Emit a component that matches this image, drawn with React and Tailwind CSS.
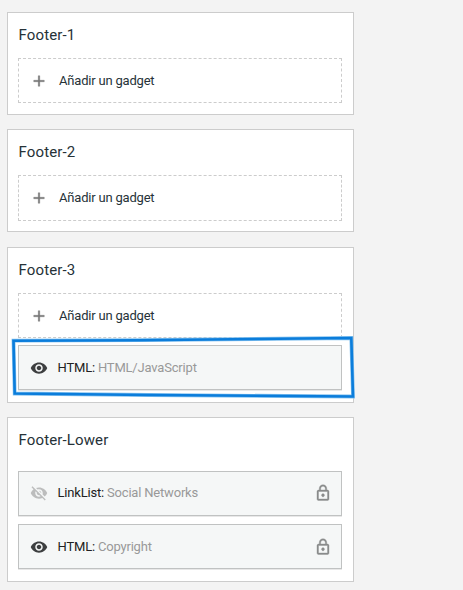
const PATHS = {
  plus: 'M19 13h-6v6h-2v-6H5v-2h6V5h2v6h6v2z',
  eye: 'M12 4.5C7 4.5 2.73 7.61 1 12c1.73 4.39 6 7.5 11 7.5s9.27-3.11 11-7.5c-1.73-4.39-6-7.5-11-7.5zM12 17c-2.76 0-5-2.24-5-5s2.24-5 5-5 5 2.24 5 5-2.24 5-5 5zm0-8c-1.66 0-3 1.34-3 3s1.34 3 3 3 3-1.34 3-3-1.34-3-3-3z',
  eyeOff:
    'M12 7c2.76 0 5 2.24 5 5 0 .65-.13 1.26-.36 1.83l2.92 2.92c1.51-1.26 2.7-2.89 3.43-4.75-1.73-4.39-6-7.5-11-7.5-1.4 0-2.74.25-3.98.7l2.16 2.16C10.74 7.13 11.35 7 12 7zM2 4.27l2.28 2.28.46.46C3.08 8.3 1.78 10.02 1 12c1.73 4.39 6 7.5 11 7.5 1.55 0 3.03-.3 4.38-.84l.42.42L19.73 22 21 20.73 3.27 3 2 4.27zM7.53 9.8l1.55 1.55c-.05.21-.08.43-.08.65 0 1.66 1.34 3 3 3 .22 0 .44-.03.65-.08l1.55 1.55c-.67.33-1.41.53-2.2.53-2.76 0-5-2.24-5-5 0-.79.2-1.53.53-2.2zm4.31-.78l3.15 3.15.02-.16c0-1.66-1.34-3-3-3l-.17.01z',
  lock: 'M12 17c1.1 0 2-.9 2-2s-.9-2-2-2-2 .9-2 2 .9 2 2 2zm6-9h-1V6c0-2.76-2.24-5-5-5S7 3.24 7 6v2H6c-1.1 0-2 .9-2 2v10c0 1.1.9 2 2 2h12c1.1 0 2-.9 2-2V10c0-1.1-.9-2-2-2zM8.9 6c0-1.71 1.39-3.1 3.1-3.1s3.1 1.39 3.1 3.1v2H8.9V6zM18 20H6V10h12v10z',
};

function Icon({ name, className }) {
  return (
    <svg viewBox="0 0 24 24" className={`size-[18px] shrink-0 fill-current ${className}`}>
      <path d={PATHS[name]} />
    </svg>
  );
}

function Section({ title, className, children }) {
  return (
    <section className={`border border-[#ccc] bg-white pl-2.5 pr-[11px] ${className}`}>
      <h2 className="pl-[0.5px] pt-3 text-[15px] leading-5 tracking-[0.13px] text-[#263238]">{title}</h2>
      {children}
    </section>
  );
}

function AddGadget({ className }) {
  return (
    <button
      className={`mt-[13px] flex w-full items-center border border-dashed border-[#ccc] pl-[11px] text-[13px] tracking-[-0.2px] text-[#263238] ${className}`}
    >
      <Icon name="plus" className="mr-[11px] stroke-current stroke-[0.5] text-[#757575]" />
      Añadir un gadget
    </button>
  );
}

function Gadget({ type, name, hidden, locked, className, children }) {
  return (
    <div
      className={`relative flex h-[45px] items-center border border-[#c0c2c2] bg-[#f5f7f7] pl-[11px] pr-[9px] text-[13px] tracking-[-0.19px] shadow-[0_1px_0_#e8e8e8] ${className}`}
    >
      <Icon
        name={hidden ? 'eyeOff' : 'eye'}
        className={hidden ? 'mr-[9.5px] text-[#bcbdbd]' : 'mr-[9.5px] text-[#3d3f40]'}
      />
      <span className="text-[#212121]">{type}:</span>
      <span className="ml-[3px] text-[#999]">{name}</span>
      {locked && <Icon name="lock" className="ml-auto stroke-current stroke-[0.5] text-[#8a8b8b]" />}
      {children}
    </div>
  );
}

function Highlight() {
  return (
    <svg
      viewBox="0 0 348 66"
      className="pointer-events-none absolute left-[-10px] top-[-11px] h-[66px] w-[348px] overflow-visible fill-none"
    >
      <path
        d="M4.5 5.7 L130 5.2 L342.3 3 L344 61.5 L140 60 L5.7 58.5 Z"
        stroke="#85c2ef"
        strokeWidth="3.8"
      />
      <path
        d="M4.5 5.7 L130 5.2 L342.3 3 L344 61.5 L140 60 L5.7 58.5 Z"
        stroke="#0b7ddb"
        strokeWidth="2.6"
      />
    </svg>
  );
}

export default function App() {
  return (
    <main className="h-[590px] w-[463px] overflow-hidden bg-[#f3f3f3] pl-[7px] pt-3 font-['Roboto','Liberation_Sans',sans-serif]">
      <div className="flex w-[347px] flex-col">
        <Section title="Footer-1" className="h-[103px]">
          <AddGadget className="h-[45px]" />
        </Section>
        <Section title="Footer-2" className="mt-3.5 h-[103px]">
          <AddGadget className="h-[46px]" />
        </Section>
        <Section title="Footer-3" className="mt-[15px] h-[156px]">
          <AddGadget className="h-[45px]" />
          <Gadget type="HTML" name="HTML/JavaScript" className="mt-[7px]">
            <Highlight />
          </Gadget>
        </Section>
        <Section title="Footer-Lower" className="mt-3.5 h-[165px]">
          <Gadget type="LinkList" name="Social Networks" hidden locked className="mt-[21px] pb-px" />
          <Gadget type="HTML" name="Copyright" locked className="mt-2" />
        </Section>
      </div>
    </main>
  );
}
